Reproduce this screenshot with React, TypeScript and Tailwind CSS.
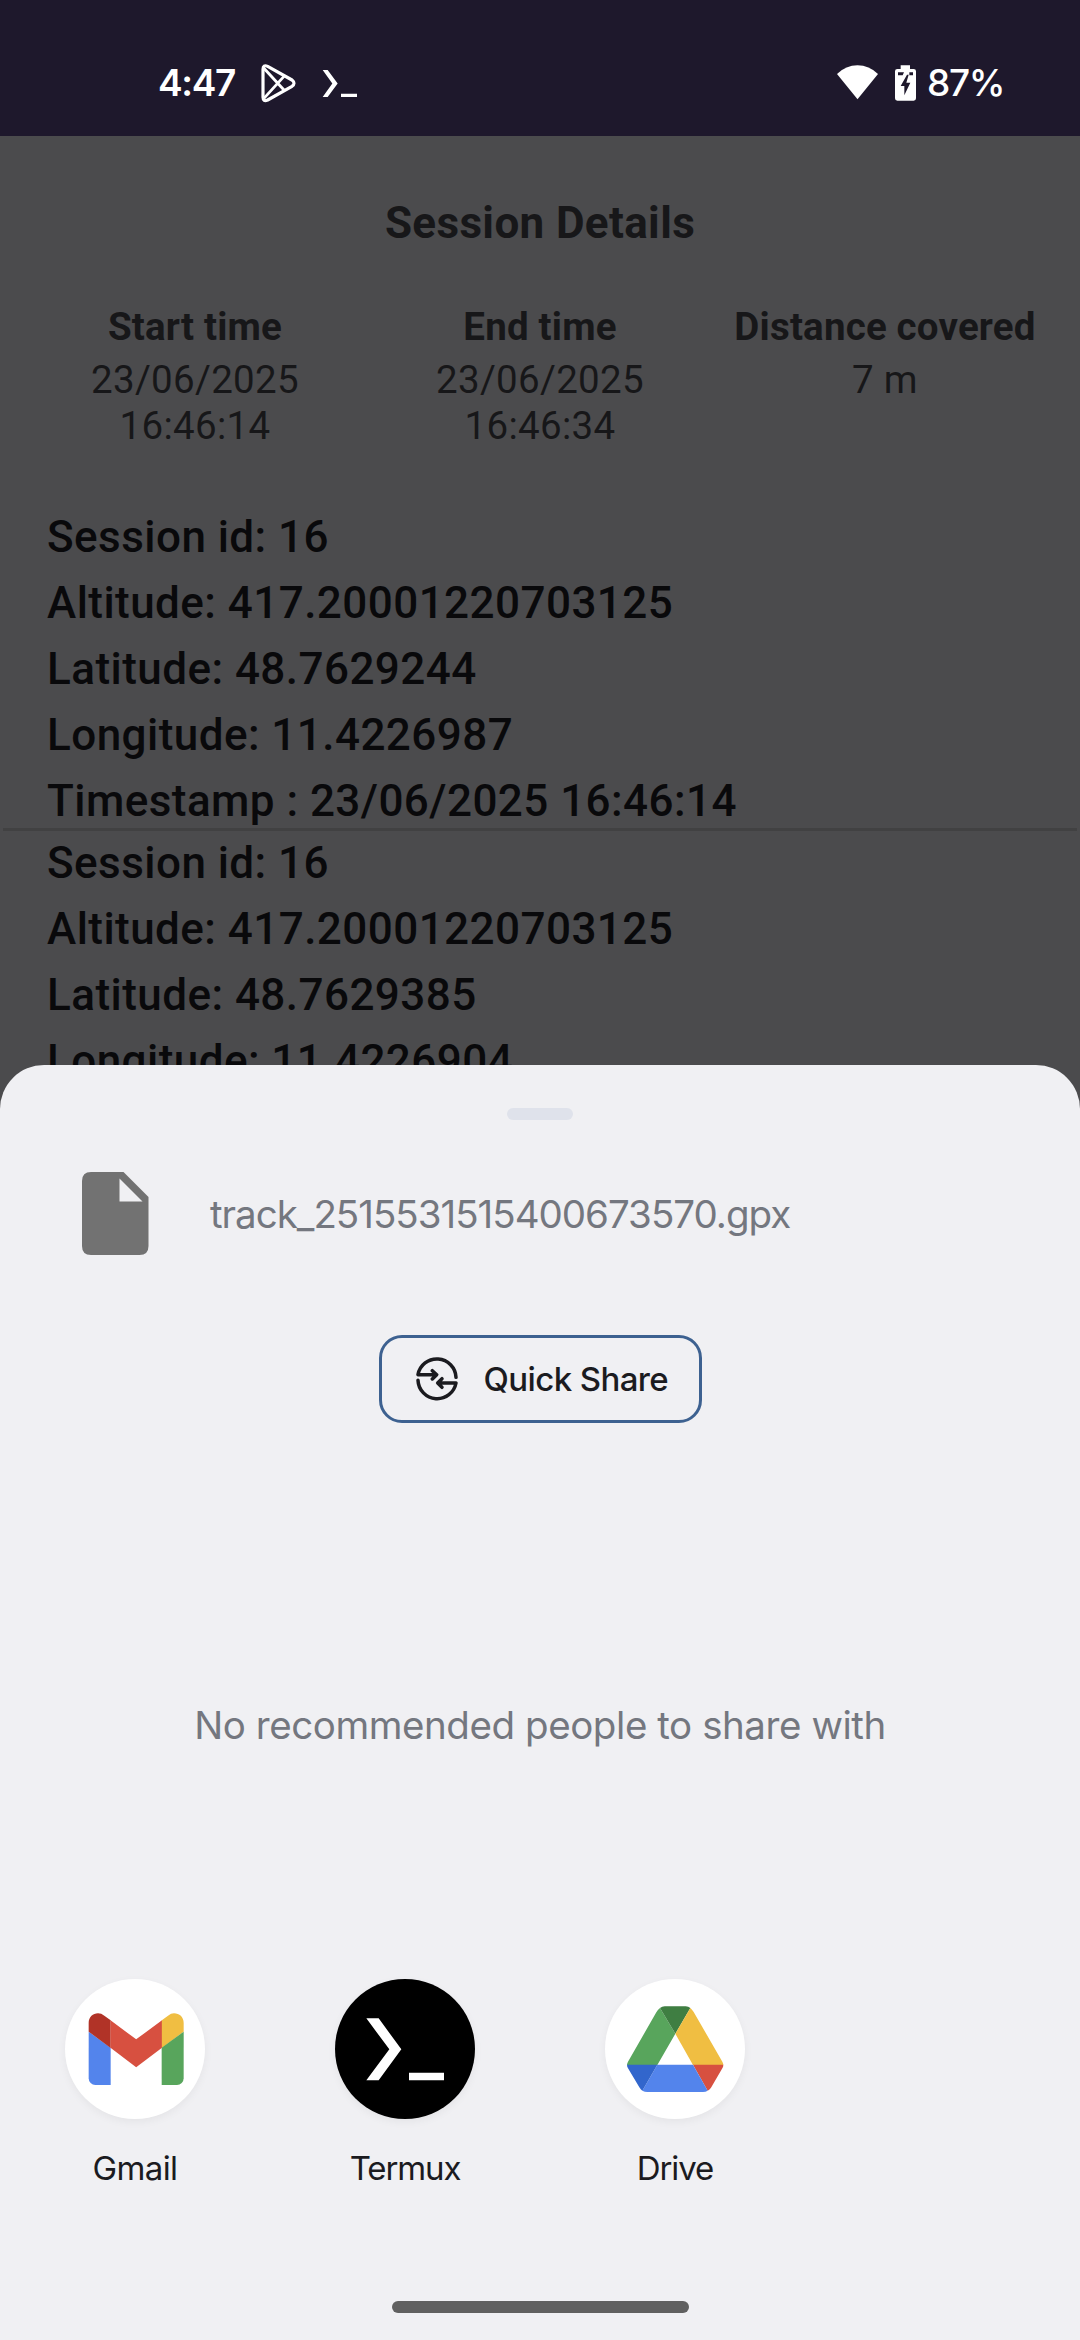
import type { ReactNode } from "react";

const points = [
  {
    id: "16",
    altitude: "417.20001220703125",
    latitude: "48.7629244",
    longitude: "11.4226987",
    timestamp: "23/06/2025 16:46:14",
  },
  {
    id: "16",
    altitude: "417.20001220703125",
    latitude: "48.7629385",
    longitude: "11.4226904",
    timestamp: "23/06/2025 16:46:16",
  },
];

function StatusBar() {
  return (
    <header className="flex h-[136px] shrink-0 items-start bg-[#1e182c] pt-[63px] pl-[158px] font-['Inter',sans-serif] text-white">
      <span className="w-[102px] text-[37px] leading-[40px] font-semibold tracking-[-1.4px] whitespace-nowrap">4:47</span>
      <svg className="h-10 w-9" viewBox="360 69 108 120" fill="none" stroke="currentColor" strokeWidth="9.5" strokeLinejoin="round">
        <path d="M369 88Q369 73 383 79L456 120Q468 130 456 139L383 180Q369 186 369 172Z" />
        <path d="M371 84L434 152M371 176L434 107" strokeWidth="8.5" />
      </svg>
      <svg className="ml-[26px] h-10 w-9" viewBox="546 69 108 120" fill="currentColor">
        <path d="M548 90H563L593 130.500L563 171H548L577 130.500ZM603 161H651V171H603Z" />
      </svg>
      <svg className="ml-[478px] h-10 w-[43px]" viewBox="48 69 129 120" fill="currentColor">
        <path d="M51 102Q78 76 112.500 76T174 102L112.500 178Z" />
      </svg>
      <svg className="ml-[15px] h-10 w-[23px]" viewBox="222 69 69 120">
        <path d="M242 76H270V87H281Q288 87 288 94V175Q288 182 281 182H232Q225 182 225 175V94Q225 87 232 87H242Z" fill="currentColor" />
        <path d="M234 97H252L248 106H234ZM268 97H279V106H268ZM261 104L242 138H253V166L271 128H259L266 104Z" fill="#1e182c" />
      </svg>
      <span className="ml-[10px] text-[37px] leading-[40px] font-medium tracking-[-1.4px] whitespace-nowrap">87%</span>
    </header>
  );
}

function Stat({ label, children }: { label: string; children: ReactNode }) {
  return (
    <div className="flex w-[345px] flex-col items-center gap-[7px] text-center text-[38.5px] leading-[46px] whitespace-nowrap">
      <div className="font-bold tracking-[0.18px]">{label}</div>
      <div className="tracking-[0.3px]">{children}</div>
    </div>
  );
}

function TrackPoint({ point }: { point: (typeof points)[number] }) {
  return (
    <div className="flex flex-col gap-[14px] pl-[47px] text-[44px] leading-[52px] font-medium tracking-[0.45px] whitespace-nowrap text-[#09090b]">
      <div>Session id: {point.id}</div>
      <div>Altitude: {point.altitude}</div>
      <div>Latitude: {point.latitude}</div>
      <div>Longitude: {point.longitude}</div>
      <div>Timestamp : {point.timestamp}</div>
    </div>
  );
}

function GmailIcon() {
  return (
    <svg className="size-full" viewBox="75 56 420 420">
      <path d="M146 214L212 262V374H166A20 20 0 0 1 146 354Z" fill="#5384ec" />
      <path d="M146 214V188C146 170 159 159 174 159Q184 159 193 166L212 180V263Z" fill="#b13327" />
      <path d="M211.500 180L288.500 237L366 180V262L288.500 321L211.500 262Z" fill="#d75040" />
      <path d="M365.500 180L384 166Q393 159 402 159C418 159 431 170 431 188V214L365.500 263Z" fill="#f0be42" />
      <path d="M365 262L431 214V354A20 20 0 0 1 411 374H365Z" fill="#58a55c" />
    </svg>
  );
}

function TermuxIcon() {
  return (
    <svg className="size-full" viewBox="75 56 420 420" fill="#fff">
      <path d="M169 174H206L274 267L206 360H169L238 267ZM297 337H402V360H297Z" />
    </svg>
  );
}

function DriveIcon() {
  return (
    <svg className="size-full" viewBox="75 56 420 420">
      <path d="M240 143L286 220L232 314H141Q141 309 144 304L229 156Q233 148 240 143Z" fill="#58a55c" />
      <path d="M240 143Q246 138 254 138H317Q325 138 331 143L286 220Z" fill="#3f7e42" />
      <path d="M331 143Q336 147 341 155L427 304Q430 309 430 314H339L286 220Z" fill="#f0be42" />
      <path d="M339 313H430Q430 319 427 324L393 382Q389 388 383 391Z" fill="#d75040" />
      <path d="M232 313H339L383 391Q377 395 369 395H202Q194 395 187 391Z" fill="#5384ec" />
      <path d="M141 313H232L187 391Q182 388 178 381L144 324Q141 319 141 313Z" fill="#3266cc" />
    </svg>
  );
}

function AppTarget({ children, circle, label }: { children: ReactNode; circle: string; label: ReactNode }) {
  return (
    <div className="flex w-[270px] flex-col items-center">
      <div className={`size-[140px] rounded-full shadow-[0_3px_8px_rgba(0,0,0,0.05)] ${circle}`}>{children}</div>
      <div className="mt-[29px] text-[33px] leading-[40px] whitespace-nowrap text-[#1b1b1f]">{label}</div>
    </div>
  );
}

function ShareSheet() {
  return (
    <section className="relative flex h-[1275px] shrink-0 flex-col items-center rounded-t-[44px] bg-[#f0f0f3] font-['Inter',sans-serif]">
      <div className="mt-[43px] h-[12px] w-[66px] rounded-full bg-[#dfe2eb]" />

      <div className="mt-[52px] flex h-[83px] w-full items-center pl-[82px]">
        <svg className="h-[83px] w-[67px]" viewBox="0 0 67 83">
          <path fillRule="evenodd" fill="#727272" d="M9 0H41.500L66.500 25V74Q66.500 83 57.500 83H9Q0 83 0 74V9Q0 0 9 0ZM37.500 6.500V29.500H60.500Z" />
        </svg>
        <div className="ml-[61px] text-[38.5px] leading-[48px] tracking-[-1px] whitespace-nowrap text-[#74777f]">
          track_2515531515400673570.gpx
        </div>
      </div>

      <button className="mt-[80px] flex h-[88px] w-[323px] items-center rounded-[23px] border-[3px] border-[#3d6190] pl-[33px] text-[#1b1b1f]">
        <svg className="size-[44px]" viewBox="162 111 132 132" fill="none" stroke="currentColor" strokeWidth="10.500" strokeLinecap="round" strokeLinejoin="round">
          <path d="M171 164A57.500 57.500 0 0 1 285 172M171 164H226M214 152L227 164L214 177" />
          <path d="M171 181A57.500 57.500 0 0 0 285 189M285 189H230M243 176L230 189L243 202" />
        </svg>
        <span className="ml-[25px] text-[33px] leading-[40px] font-medium tracking-[-0.6px] whitespace-nowrap">Quick Share</span>
      </button>

      <div className="mt-[278px] text-[38.5px] leading-[48px] tracking-[-0.43px] whitespace-nowrap text-[#74777f]">
        No recommended people to share with
      </div>

      <div className="mt-[230px] flex w-full">
        <AppTarget circle="bg-white" label={<span className="tracking-[-0.6px]">Gmail</span>}>
          <GmailIcon />
        </AppTarget>
        <AppTarget circle="bg-black" label={<span className="tracking-[-1.1px]">Termux</span>}>
          <TermuxIcon />
        </AppTarget>
        <AppTarget circle="bg-white" label={<span className="tracking-[-1.1px]">Drive</span>}>
          <DriveIcon />
        </AppTarget>
      </div>

      <div className="mt-[113px] h-[12px] w-[297px] rounded-full bg-[#606060]" />
    </section>
  );
}

export default function App() {
  return (
    <div className="flex h-[2340px] w-[1080px] flex-col overflow-hidden bg-[#4b4b4d] font-['Roboto',sans-serif]">
      <StatusBar />
      <main className="h-[929px] shrink-0 text-[#171719]">
        <h1 className="pt-[61px] text-center text-[44px] leading-[52px] font-bold tracking-[0.36px]">Session Details</h1>
        <div className="mt-[55px] flex justify-center">
          <Stat label="Start time">
            23/06/2025
            <br />
            16:46:14
          </Stat>
          <Stat label="End time">
            23/06/2025
            <br />
            16:46:34
          </Stat>
          <Stat label="Distance covered">7 m</Stat>
        </div>
        <div className="mt-[62px]">
          <TrackPoint point={points[0]} />
          <div className="mx-[3px] mt-px mb-[6px] h-[3px] bg-[#414142]" />
          <TrackPoint point={points[1]} />
        </div>
      </main>
      <ShareSheet />
    </div>
  );
}
